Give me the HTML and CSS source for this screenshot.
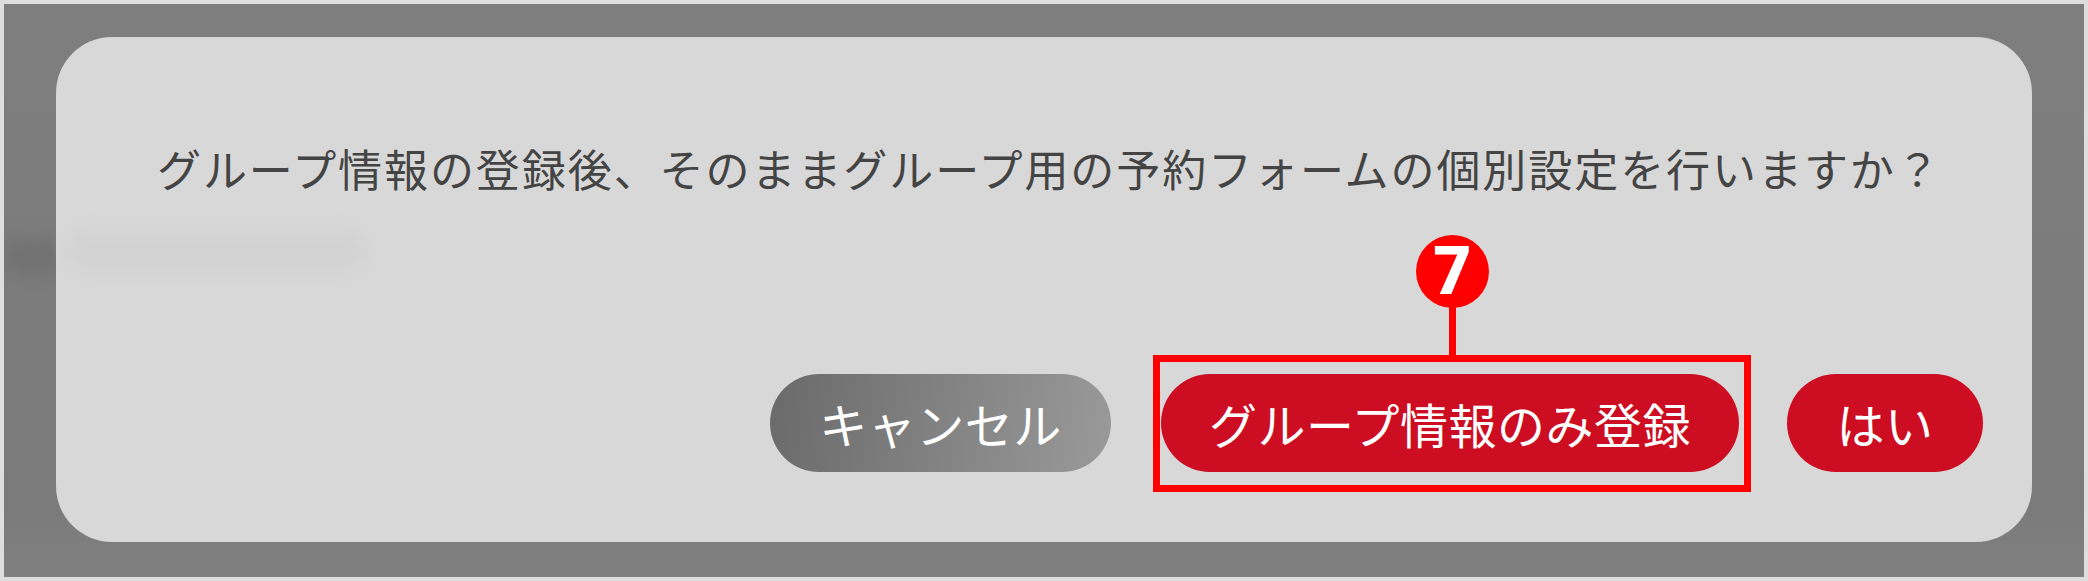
FILE: index.html
```html
<!DOCTYPE html>
<html lang="ja">
<head>
    <meta charset="UTF-8">
    <meta name="viewport" content="width=device-width, initial-scale=1.0">
    <title>グループ情報の登録</title>
    <link rel="stylesheet" href="styles.css">
</head>
<body>
    <div class="overlay">
        <!-- Blurred page text showing through the dialog -->
        <div class="ghost-band"></div>
        <!-- Confirm dialog -->
        <div class="dialog">
            <div class="ghost-text"></div>
            <p class="message">グループ情報の登録後、そのままグループ用の予約フォームの個別設定を行いますか？</p>
            <div class="actions">
                <button class="btn btn-cancel">キャンセル</button>
                <div class="target">
                    <button class="btn btn-red">グループ情報のみ登録</button>
                    <!-- Annotation: frame and numbered pin -->
                    <div class="callout">
                        <div class="pin">
                            <span class="pin-num">7</span>
                        </div>
                    </div>
                </div>
                <button class="btn btn-red btn-yes">はい</button>
            </div>
        </div>
    </div>
</body>
</html>
```

FILE: styles.css
```css
* {
    box-sizing: border-box;
}
body {
    margin: 0;
    height: 581px;
    overflow: hidden;
    padding: 4px;
    background-color: #dedede;
    font-family: "Noto Sans CJK JP", "Liberation Sans", sans-serif;
}
.overlay {
    position: relative;
    height: 573px;
    overflow: hidden;
    padding: 33px 52px 35px;
    background: linear-gradient(#7e7e7e, #7b7b7b 88%, #808080);
}
.ghost-band {
    position: absolute;
    top: 236px;
    left: 0;
    width: 60px;
    height: 34px;
    background-color: #717171;
    filter: blur(10px);
}
.dialog {
    position: relative;
    height: 505px;
    padding: 101px 49px 70px 0;
    display: flex;
    flex-direction: column;
    justify-content: space-between;
    background-color: #d8d8d8;
    border-radius: 56px;
}
.message {
    position: relative;
    margin: 0;
    padding-left: 101px;
    font-size: 44px;
    line-height: 60px;
    letter-spacing: 1.93px;
    white-space: nowrap;
    color: #444;
}
.actions {
    position: relative;
    display: flex;
    justify-content: flex-end;
    gap: 50px;
}
.btn {
    height: 98px;
    padding: 0;
    border: none;
    border-radius: 49px;
    font-family: inherit;
    font-size: 48px;
    letter-spacing: 0.5px;
    color: #fff;
}
.btn-cancel {
    width: 341px;
    background: linear-gradient(100deg, #6a6a6a, #9a9a9a);
}
.btn-red {
    width: 578px;
    background-color: #cc0d22;
}
.btn-yes {
    width: 196px;
}
.target {
    position: relative;
    display: flex;
    margin-right: -2px;
}
.callout {
    position: absolute;
    top: -19px;
    right: -12px;
    bottom: -20px;
    left: -8px;
    border: 7px solid #f00;
}
.pin {
    position: absolute;
    top: -127px;
    left: 256px;
    width: 73px;
    height: 73px;
    display: flex;
    align-items: center;
    justify-content: center;
    background-color: #f00;
    border-radius: 50%;
}
.pin::after {
    content: "";
    position: absolute;
    top: 72px;
    left: 33px;
    width: 7px;
    height: 50px;
    background-color: #f00;
}
.pin-num {
    font-family: Roboto, sans-serif;
    font-size: 66px;
    font-weight: 900;
    line-height: 1;
    color: #fff;
}
.ghost-text {
    position: absolute;
    top: 196px;
    left: 12px;
    width: 296px;
    height: 36px;
    background-color: #d1d1d1;
    border-radius: 18px;
    filter: blur(9px);
}
```
